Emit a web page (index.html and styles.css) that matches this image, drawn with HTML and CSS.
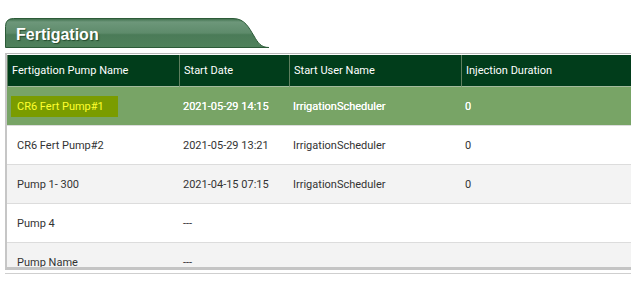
FILE: index.html
```html
<!DOCTYPE html>
<html lang="en">
<head>
    <meta charset="UTF-8">
    <meta name="viewport" content="width=device-width, initial-scale=1.0">
    <title>Fertigation</title>
    <link rel="stylesheet" href="styles.css">
</head>
<body>
    <div class="tab">
        <svg class="tab-bg" width="264" height="30" viewBox="0 0 264 30">
            <defs>
                <linearGradient id="gloss" x1="0" y1="0" x2="0" y2="1">
                    <stop offset="0" stop-color="#3d6d4a"/>
                    <stop offset="0.12" stop-color="#6d977a"/>
                    <stop offset="0.5" stop-color="#5e8b6b"/>
                    <stop offset="0.56" stop-color="#4b7b58"/>
                    <stop offset="1" stop-color="#4f815b"/>
                </linearGradient>
            </defs>
            <path d="M0.5,29.5 L0.5,8.5 Q0.5,0.5 8.5,0.5 L228,0.5 C240,0.5 244,10 249,18 C253,25 256,29.5 264,29.5 Z" fill="url(#gloss)" stroke="#2c5b38" stroke-width="1"/>
        </svg>
        <h2>Fertigation</h2>
    </div>

    <div class="panel">
        <div class="grid">
            <table>
                <colgroup>
                    <col class="c-name">
                    <col class="c-date">
                    <col class="c-user">
                    <col class="c-dur">
                </colgroup>
                <thead>
                    <tr>
                        <th>Fertigation Pump Name</th>
                        <th>Start Date</th>
                        <th>Start User Name</th>
                        <th>Injection Duration</th>
                    </tr>
                </thead>
                <tbody>
                    <tr class="selected">
                        <td><span class="pump active">CR6 Fert Pump#1</span></td>
                        <td>2021-05-29 14:15</td>
                        <td>IrrigationScheduler</td>
                        <td>0</td>
                    </tr>
                    <tr>
                        <td><span class="pump">CR6 Fert Pump#2</span></td>
                        <td>2021-05-29 13:21</td>
                        <td>IrrigationScheduler</td>
                        <td>0</td>
                    </tr>
                    <tr class="alt">
                        <td><span class="pump">Pump 1- 300</span></td>
                        <td>2021-04-15 07:15</td>
                        <td>IrrigationScheduler</td>
                        <td>0</td>
                    </tr>
                    <tr>
                        <td><span class="pump">Pump 4</span></td>
                        <td>---</td>
                        <td></td>
                        <td></td>
                    </tr>
                    <tr class="alt">
                        <td><span class="pump">Pump Name</span></td>
                        <td>---</td>
                        <td></td>
                        <td></td>
                    </tr>
                </tbody>
            </table>
        </div>
    </div>
</body>
</html>
```

FILE: styles.css
```css
body {
    margin: 0;
    padding: 18px 0 0 5px;
    background: #fff;
    font-family: Roboto, "Liberation Sans", sans-serif;
}
.tab {
    position: relative;
    width: 264px;
    height: 30px;
}
.tab-bg {
    position: absolute;
    left: 0;
    top: 0;
}
.tab h2 {
    position: relative;
    margin: 0;
    padding: 8px 0 0 11px;
    color: #fff;
    font-family: "Liberation Sans", Arial, sans-serif;
    font-size: 16px;
    font-weight: bold;
    line-height: 18px;
    text-shadow: 1px 1px 1px #234a2c;
}
.panel {
    margin-top: 5px;
    border-bottom: 1px solid #cfcfcf;
    padding-bottom: 3px;
}
.grid {
    height: 212px;
    overflow: hidden;
    border-top: 1px solid #b8b8b8;
    border-left: 2px solid #c6c6c6;
    border-bottom: 3px solid #c4c4c4;
    padding-top: 1px;
}
table {
    border-collapse: separate;
    border-spacing: 0;
    table-layout: fixed;
    width: 100%;
    font-size: 11px;
}
.c-name { width: 172px; }
.c-date { width: 110px; }
.c-user { width: 172px; }
th {
    height: 31px;
    padding: 0 4px;
    background: #013d1b;
    color: #fff;
    font-weight: normal;
    text-align: left;
    border-left: 1px solid #5f7f5f;
    border-bottom: 1px solid #a3bb9c;
}
td {
    height: 38px;
    padding: 0 4px;
    color: #333;
    background: #fff;
    border-bottom: 1px solid #dcdcdc;
    white-space: nowrap;
}
tr.alt td {
    background: #f3f3f3;
}
tr.selected td {
    background: #78a466;
    color: #fff;
    text-shadow: 0 0 0.4px #fff;
}
.pump {
    display: inline-block;
    padding: 4px 14px 4px 6px;
    line-height: 13px;
}
.pump.active {
    background: #7a9c00;
    color: #ffff2e;
    text-shadow: none;
}
```
